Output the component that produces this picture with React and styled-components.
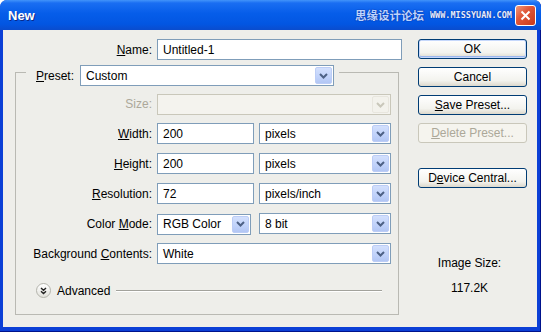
import React from "react";
import styled, { createGlobalStyle, css } from "styled-components";

const GlobalStyle = createGlobalStyle`
  html, body {
    margin: 0;
    padding: 0;
    background: #ffffff;
  }
  body {
    font-family: "Liberation Sans", Arial, sans-serif;
    font-size: 12px;
    color: #000;
  }
`;

const Window = styled.div`
  width: 541px;
  height: 332px;
  box-sizing: border-box;
  display: flex;
  flex-direction: column;
  background: #0b3fd6;
  border-radius: 7px 7px 0 0;
  overflow: hidden;
  box-shadow: inset -1px -1px 0 #00138c;
`;

const TitleBar = styled.div`
  position: relative;
  height: 30px;
  flex-shrink: 0;
  display: flex;
  align-items: center;
  padding: 0 5px 0 8px;
  background: linear-gradient(
    #4294fa 0%,
    #1a6ef2 10%,
    #065de9 45%,
    #0256e2 80%,
    #0a4ccd 100%
  );
`;

const Title = styled.div`
  flex: 1;
  color: #fff;
  font-weight: bold;
  font-size: 13px;
  text-shadow: 1px 1px 0 #0a2a8a;
`;

const Watermark = styled.div`
  position: absolute;
  left: 355px;
  top: 7px;
  display: flex;
  align-items: center;
  gap: 6px;
  pointer-events: none;
  z-index: 2;
`;

const WatermarkCn = styled.span`
  font-family: "Noto Sans CJK SC", sans-serif;
  font-size: 11.5px;
  font-weight: bold;
  color: #bcd4ff;
  text-shadow: 0 0 1px #0a2d9a, 0 0 1px #0a2d9a;
`;

const WatermarkUrl = styled.span`
  font-family: "DejaVu Sans Mono", monospace;
  font-size: 8.5px;
  font-weight: bold;
  color: #e4eeff;
  text-shadow: 0 0 1px #0a2d9a, 0 0 1px #0a2d9a;
`;

const CloseBtn = styled.div`
  width: 21px;
  height: 21px;
  box-sizing: border-box;
  border: 1px solid #fff;
  border-radius: 3px;
  background: linear-gradient(135deg, #f09a7c 0%, #e0583a 40%, #c8391a 100%);
  display: flex;
  align-items: center;
  justify-content: center;
`;

const Body = styled.div`
  flex: 1;
  display: flex;
  margin: 0 4px 5px 3px;
  background: #eeeeea;
`;

const FormPane = styled.div`
  width: 405px;
  box-sizing: border-box;
  padding: 9px 0 0 12px;
`;

const NameRow = styled.div`
  display: grid;
  grid-template-columns: 137px 245px;
  column-gap: 5px;
  align-items: center;
`;

const Label = styled.div`
  text-align: right;
  white-space: nowrap;
  color: ${(p) => (p.$disabled ? "#aca899" : "#000")};
`;

const TextBox = styled.div`
  box-sizing: border-box;
  height: 21px;
  border: 1px solid #7f9db9;
  background: #fff;
  padding: 0 5px;
  display: flex;
  align-items: center;
  white-space: nowrap;
`;

const Group = styled.fieldset`
  margin: 5px 0 0 0;
  width: 384px;
  box-sizing: border-box;
  padding: 0 7px 16px 0;
  border: 1px solid #b9b9b3;
  min-width: 0;
`;

const Legend = styled.legend`
  margin-left: 10px;
  padding: 0 5px 0 10px;
  height: 14px;
`;

const LegendInner = styled.div`
  display: flex;
  align-items: center;
  gap: 6px;
`;

const Rows = styled.div`
  display: grid;
  grid-template-columns: 136px 97px 132px;
  column-gap: 5px;
  row-gap: 9px;
  align-items: center;
  margin-top: 15px;
`;

const SelectBox = styled.div`
  box-sizing: border-box;
  height: 21px;
  width: ${(p) => (p.$w ? `${p.$w}px` : "auto")};
  grid-column: ${(p) => (p.$span ? `span ${p.$span}` : "auto")};
  margin-bottom: ${(p) => p.$pullUp || 0}px;
  border: 1px solid ${(p) => (p.$disabled ? "#c9c7ba" : "#7f9db9")};
  background: ${(p) => (p.$disabled ? "#f4f3ee" : "#fff")};
  display: flex;
  align-items: stretch;
  padding: 1px;
`;

const SelectText = styled.div`
  flex: 1;
  display: flex;
  align-items: center;
  padding-left: 4px;
  white-space: nowrap;
  overflow: hidden;
`;

const ArrowBtn = styled.div`
  width: 17px;
  box-sizing: border-box;
  border-radius: 2px;
  display: flex;
  align-items: center;
  justify-content: center;
  ${(p) =>
    p.$disabled
      ? css`
          border: 1px solid #e8e6de;
          background: #f3f2ec;
        `
      : css`
          border: 1px solid #bccdf6;
          background: linear-gradient(#d3e0fd, #c0d2fa 60%, #b2c6f4);
        `}
`;

const AdvancedRow = styled.div`
  display: flex;
  align-items: center;
  margin-top: 19px;
  padding-left: 20px;
`;

const AdvIcon = styled.div`
  width: 15px;
  height: 15px;
  box-sizing: border-box;
  border-radius: 50%;
  border: 1px solid #b4b4ac;
  background: linear-gradient(#ffffff, #e2e2dc);
  display: flex;
  align-items: center;
  justify-content: center;
`;

const AdvText = styled.span`
  margin-left: 6px;
`;

const AdvLine = styled.div`
  flex: 1;
  height: 1px;
  background: #a2a29c;
  box-shadow: 0 1px 0 #fff;
  margin: 0 9px 0 6px;
`;

const ButtonPane = styled.div`
  flex: 1;
  padding: 9px 10px 0 10px;
  display: flex;
  flex-direction: column;
  gap: 8px;
`;

const Button = styled.div`
  box-sizing: border-box;
  width: 109px;
  height: 20px;
  border: 1px solid #003c74;
  border-radius: 3px;
  background: linear-gradient(#ffffff, #f3f3ee 70%, #dcd8cc);
  display: flex;
  align-items: center;
  justify-content: center;
  line-height: 1;
  white-space: nowrap;
  margin-top: ${(p) => p.$gapTop || 0}px;
  ${(p) =>
    p.$default &&
    css`
      box-shadow: inset 0 0 0 1px #c6d8fb, inset 0 -1px 0 1px #9ab6ee;
    `}
  ${(p) =>
    p.$disabled &&
    css`
      border-color: #c9c7ba;
      color: #aca899;
      background: #f5f4ee;
    `}
`;

const SizeInfo = styled.div`
  margin-top: 60px;
  display: flex;
  flex-direction: column;
  align-items: center;
  gap: 11px;
  padding-right: 6px;
`;

const Chevron = ({ disabled }) => (
  <svg width="9" height="6" viewBox="0 0 9 6">
    <path
      d="M1 1 L4.5 4.5 L8 1"
      fill="none"
      stroke={disabled ? "#c9c7ba" : "#4d6185"}
      strokeWidth="2"
    />
  </svg>
);

const Select = ({ value, disabled, w, span, pullUp }) => (
  <SelectBox $disabled={disabled} $w={w} $span={span} $pullUp={pullUp}>
    <SelectText>{value}</SelectText>
    <ArrowBtn $disabled={disabled}>
      <Chevron disabled={disabled} />
    </ArrowBtn>
  </SelectBox>
);

const App = () => {
  return (
    <>
      <GlobalStyle />
      <Window>
        <TitleBar>
          <Title>New</Title>
          <Watermark>
            <WatermarkCn>思缘设计论坛</WatermarkCn>
            <WatermarkUrl>WWW.MISSYUAN.COM</WatermarkUrl>
          </Watermark>
          <CloseBtn>
            <svg width="11" height="11" viewBox="0 0 11 11">
              <path d="M1.5 1.5 L9.5 9.5 M9.5 1.5 L1.5 9.5" stroke="#fff" strokeWidth="2" />
            </svg>
          </CloseBtn>
        </TitleBar>
        <Body>
          <FormPane>
            <NameRow>
              <Label>
                <u>N</u>ame:
              </Label>
              <TextBox>Untitled-1</TextBox>
            </NameRow>
            <Group>
              <Legend>
                <LegendInner>
                  <Label>
                    <u>P</u>reset:
                  </Label>
                  <Select value="Custom" w={254} />
                </LegendInner>
              </Legend>
              <Rows>
                <Label $disabled>Size:</Label>
                <Select value="" disabled span={2} pullUp={-1} />

                <Label>
                  <u>W</u>idth:
                </Label>
                <TextBox>200</TextBox>
                <Select value="pixels" />

                <Label>
                  <u>H</u>eight:
                </Label>
                <TextBox>200</TextBox>
                <Select value="pixels" />

                <Label>
                  <u>R</u>esolution:
                </Label>
                <TextBox>72</TextBox>
                <Select value="pixels/inch" />

                <Label>
                  Color <u>M</u>ode:
                </Label>
                <Select value="RGB Color" w={94} pullUp={-1} />
                <Select value="8 bit" />

                <Label>
                  Background <u>C</u>ontents:
                </Label>
                <Select value="White" span={2} />
              </Rows>
              <AdvancedRow>
                <AdvIcon>
                  <svg width="7" height="8" viewBox="0 0 7 8">
                    <path
                      d="M1 1 L3.5 3.3 L6 1 M1 4.2 L3.5 6.5 L6 4.2"
                      fill="none"
                      stroke="#222"
                      strokeWidth="1.4"
                    />
                  </svg>
                </AdvIcon>
                <AdvText>Advanced</AdvText>
                <AdvLine />
              </AdvancedRow>
            </Group>
          </FormPane>
          <ButtonPane>
            <Button $default>OK</Button>
            <Button>Cancel</Button>
            <Button>
              <u>S</u>ave Preset...
            </Button>
            <Button $disabled>
              <u>D</u>elete Preset...
            </Button>
            <Button $gapTop={17}>
              D<u>e</u>vice Central...
            </Button>
            <SizeInfo>
              <span>Image Size:</span>
              <span>117.2K</span>
            </SizeInfo>
          </ButtonPane>
        </Body>
      </Window>
    </>
  );
};

export default App;
